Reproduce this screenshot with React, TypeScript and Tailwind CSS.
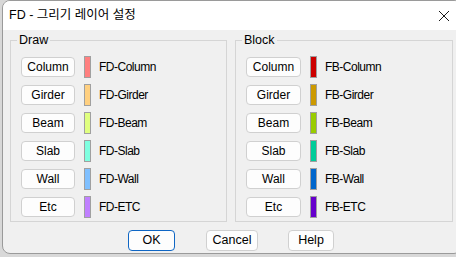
import React from "react";

interface Layer {
  name: string;
  layer: string;
  color: string;
}

const drawLayers: Layer[] = [
  { name: "Column", layer: "FD-Column", color: "#ff8080" },
  { name: "Girder", layer: "FD-Girder", color: "#ffd080" },
  { name: "Beam", layer: "FD-Beam", color: "#e0ff80" },
  { name: "Slab", layer: "FD-Slab", color: "#80ffe0" },
  { name: "Wall", layer: "FD-Wall", color: "#80c0ff" },
  { name: "Etc", layer: "FD-ETC", color: "#c080ff" },
];

const blockLayers: Layer[] = [
  { name: "Column", layer: "FB-Column", color: "#cc0000" },
  { name: "Girder", layer: "FB-Girder", color: "#cc9900" },
  { name: "Beam", layer: "FB-Beam", color: "#99cc00" },
  { name: "Slab", layer: "FB-Slab", color: "#00cc99" },
  { name: "Wall", layer: "FB-Wall", color: "#0066cc" },
  { name: "Etc", layer: "FB-ETC", color: "#6600cc" },
];

const font = { fontFamily: '"Liberation Sans", "Noto Sans CJK KR", sans-serif' };

const LayerGroup: React.FC<{ title: string; layers: Layer[]; btnW: string; className: string }> = ({
  title,
  layers,
  btnW,
  className,
}) => (
  <div className={`relative border border-[#d5d5d5] h-[182px] pl-[10px] pt-[16px] ${className}`}>
    <span className="absolute -top-[8px] left-[6px] bg-[#f0f0f0] px-[2px] text-[12.5px] leading-[14px] text-black">
      {title}
    </span>
    <div className="flex flex-col gap-[8px]">
      {layers.map((l) => (
        <div key={l.layer} className="flex items-center h-[20px]">
          <button
            className={`${btnW} h-[20px] bg-[#fdfdfd] border border-[#d0d0d0] rounded-[4px] text-[12px] leading-none text-black`}
          >
            {l.name}
          </button>
          <span
            className="ml-[9px] w-[7px] h-[22px] border border-[#a0a0a0]"
            style={{ backgroundColor: l.color }}
          />
          <span className="ml-[8px] text-[12px] tracking-[-0.5px] text-black">{l.layer}</span>
        </div>
      ))}
    </div>
  </div>
);

export default function App() {
  return (
    <div className="w-[456px] h-[257px] bg-[#d8d8d8] overflow-hidden" style={font}>
      <div className="ml-[2px] w-[460px] h-[254px] bg-[#f0f0f0] border border-[#9a9a9a] rounded-[8px] flex flex-col overflow-hidden">
        <div className="h-[29px] bg-white flex items-center justify-between pl-[6px] pr-[11px] shrink-0">
          <span className="text-[12.5px] text-black">FD - 그리기 레이어 설정</span>
          <svg width="12" height="12" viewBox="0 0 12 12" className="mt-[1px]">
            <path d="M1 1L11 11M11 1L1 11" stroke="#1a1a1a" strokeWidth="1" />
          </svg>
        </div>
        <div className="flex pl-[7px] pt-[10px] gap-[8px]">
          <LayerGroup title="Draw" layers={drawLayers} btnW="w-[54px]" className="w-[217px]" />
          <LayerGroup title="Block" layers={blockLayers} btnW="w-[55px]" className="w-[218px]" />
        </div>
        <div className="flex mt-[8px] pl-[125px]">
          <button className="w-[47px] h-[21px] bg-[#fdfdfd] border-[1.5px] border-[#0f66c4] rounded-[4px] text-[12.5px] leading-none text-black">
            OK
          </button>
          <button className="ml-[31px] w-[52px] h-[21px] bg-[#fdfdfd] border border-[#d0d0d0] rounded-[4px] text-[12.5px] leading-none text-black">
            Cancel
          </button>
          <button className="ml-[30px] w-[46px] h-[21px] bg-[#fdfdfd] border border-[#d0d0d0] rounded-[4px] text-[12.5px] leading-none text-black">
            Help
          </button>
        </div>
      </div>
    </div>
  );
}
